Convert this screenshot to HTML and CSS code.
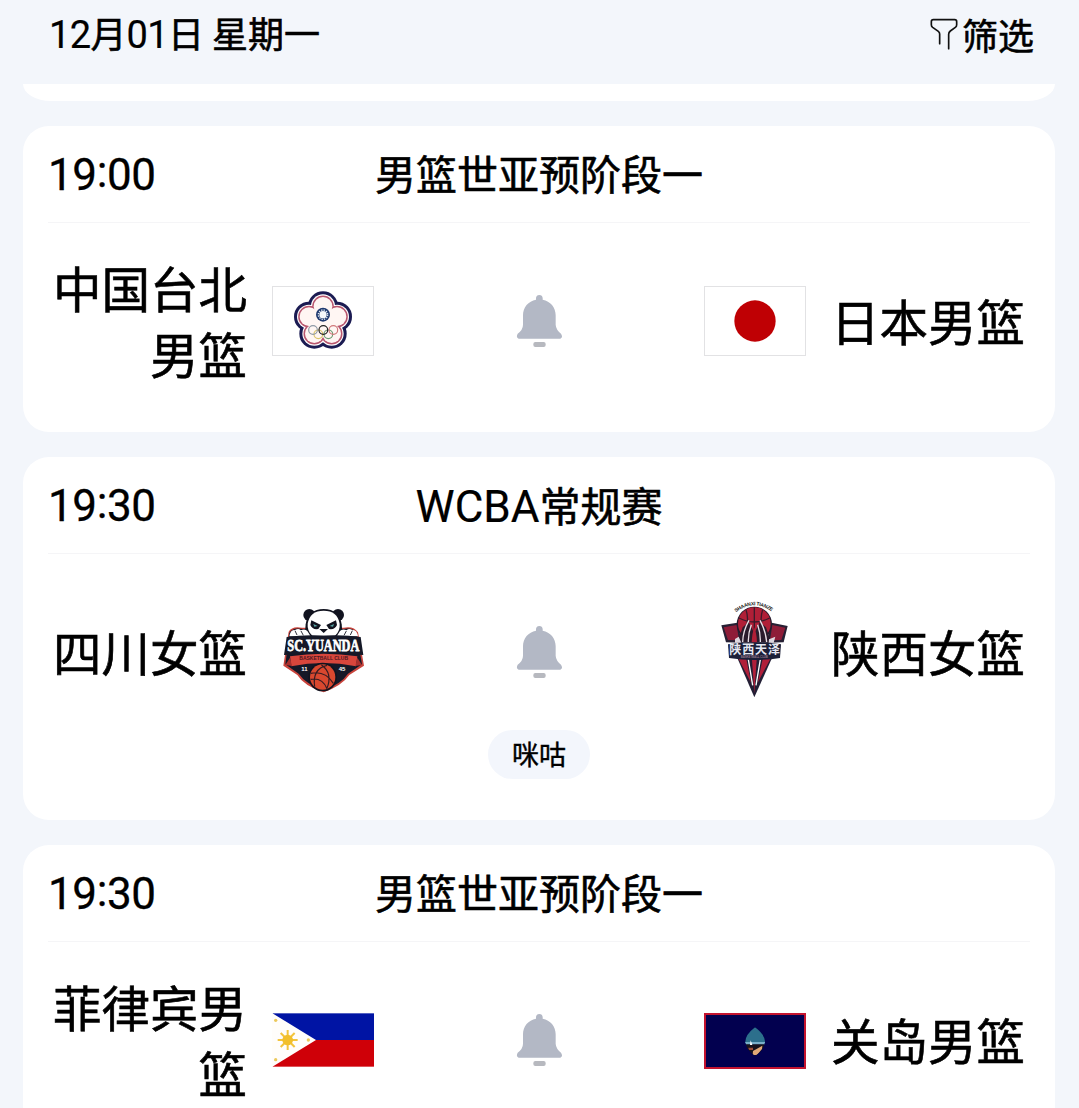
FILE: index.html
```html
<!DOCTYPE html>
<html lang="zh-CN">
<head>
  <meta charset="UTF-8">
  <title>赛程</title>
  <link rel="stylesheet" href="styles.css">
</head>
<body>

  <!-- shared icons -->
  <svg class="defs" width="0" height="0">
    <symbol id="bell" viewBox="467 466 141 162">
      <path fill="#b3b8c5" d="M527 483 V478 Q528 469 537 469 Q546 469 547 478 V483 C570 488 586 505 586 530 V558 Q587 573 602 585 Q609 596 600 600 H475 Q466 596 472 585 Q488 573 488 558 V530 C488 505 504 488 527 483 Z"/>
      <rect fill="#b7b9bf" x="519" y="610" width="37" height="15" rx="6"/>
    </symbol>
  </svg>

  <header class="top-bar">
    <div class="date"><span class="num">12</span>月<span class="num">01</span>日 星期一</div>
    <div class="filter">
      <svg class="filter-icon" viewBox="150 52 84 96">
        <path d="M179 129 V100 Q179 95 175 92 L158 80 Q154 77 154 72 V63 Q154 57 160 57 H224 Q230 57 230 63 V72 Q230 77 226 80 L211 91 Q206 95 206 101 V144"/>
      </svg>
      <span>筛选</span>
    </div>
  </header>

  <main class="schedule">
    <div class="card-tail"></div>

    <section class="card">
      <div class="card-head">
        <span class="time">19<span class="colon">:</span>00</span>
        <span class="league">男篮世亚预阶段一</span>
      </div>
      <div class="match">
        <div class="team home">中国台北男篮</div>
        <svg class="logo" viewBox="30 45 306 210">
          <rect x="31.5" y="46.5" width="303" height="207" fill="#fff" stroke="#e2e2e4" stroke-width="3"/>
          <g fill="#1b1b52">
            <circle cx="183" cy="106" r="45"/><circle cx="225" cy="137" r="45"/><circle cx="209" cy="188" r="45"/><circle cx="157" cy="188" r="45"/><circle cx="141" cy="137" r="45"/>
          </g>
          <g fill="#fff">
            <circle cx="183" cy="106" r="36"/><circle cx="225" cy="137" r="36"/><circle cx="209" cy="188" r="36"/><circle cx="157" cy="188" r="36"/><circle cx="141" cy="137" r="36"/>
          </g>
          <g fill="#b8566e">
            <circle cx="183" cy="106" r="32.5"/><circle cx="225" cy="137" r="32.5"/><circle cx="209" cy="188" r="32.5"/><circle cx="157" cy="188" r="32.5"/><circle cx="141" cy="137" r="32.5"/>
          </g>
          <g fill="#fff6f3">
            <circle cx="183" cy="106" r="28"/><circle cx="225" cy="137" r="28"/><circle cx="209" cy="188" r="28"/><circle cx="157" cy="188" r="28"/><circle cx="141" cy="137" r="28"/><circle cx="183" cy="152" r="44"/>
          </g>
          <circle cx="183" cy="131" r="21" fill="#1f3a70"/>
          <circle cx="183" cy="131" r="14" fill="none" stroke="#dfe8f2" stroke-width="4" stroke-dasharray="4 3.33"/>
          <circle cx="183" cy="131" r="11" fill="#f4f8fb"/>
          <g fill="none" stroke-width="3.5">
            <circle cx="169" cy="190" r="13" stroke="#dcc56a"/>
            <circle cx="199" cy="190" r="13" stroke="#6d9b72"/>
            <circle cx="153" cy="177" r="13" stroke="#8f99a5"/>
            <circle cx="214" cy="177" r="13" stroke="#d0787a"/>
            <circle cx="184" cy="177" r="13" stroke="#222"/>
          </g>
        </svg>
        <svg class="bell"><use href="#bell"/></svg>
        <svg class="logo" viewBox="0 0 306 210">
          <rect x="1.5" y="1.5" width="303" height="207" fill="#fff" stroke="#e2e2e4" stroke-width="3"/>
          <circle cx="153" cy="105" r="62" fill="#bf0004"/>
        </svg>
        <div class="team away">日本男篮</div>
      </div>
    </section>

    <section class="card">
      <div class="card-head">
        <span class="time">19<span class="colon">:</span>30</span>
        <span class="league"><span class="latin">WCBA</span>常规赛</span>
      </div>
      <div class="match">
        <div class="team home">四川女篮</div>
        <svg class="logo" viewBox="30 18 306 306">
          <path fill="#c9443c" d="M80 110 Q90 92 120 98 H245 Q275 92 288 112 L306 212 L262 240 Q240 272 185 292 Q125 272 106 240 L64 212 Z"/>
          <path fill="#151827" d="M82 114 Q92 96 122 102 H245 Q272 96 284 114 L300 208 L258 236 Q238 266 185 286 Q130 266 110 236 L70 208 Z"/>
          <!-- panda -->
          <circle cx="142" cy="60" r="18" fill="#11131f"/>
          <circle cx="228" cy="60" r="18" fill="#11131f"/>
          <path fill="#11131f" d="M131 88 Q138 42 185 42 Q232 42 239 88 L242 124 H128 Z"/>
          <path fill="#fff" d="M137 86 Q144 47 185 47 Q226 47 233 86 Q235 108 219 122 H151 Q135 108 137 86 Z"/>
          <path fill="#11131f" d="M148 76 L177 90 L169 102 Q151 105 145 90 Z M222 76 L193 90 L201 102 Q219 105 225 90 Z M172 102 H198 L185 114 Z"/>
          <path fill="#56a5a5" d="M154 87 L167 93 L157 95 Z M216 87 L203 93 L213 95 Z"/>
          <path fill="#fff" d="M82 124 Q86 102 99 105 Q110 98 116 106 Q129 100 136 108 L146 124 Z M288 124 Q284 102 271 105 Q260 98 254 106 Q241 100 234 108 L224 124 Z"/>
          <path fill="none" stroke="#31333e" stroke-width="3" d="M99 107 L105 120 M117 108 L124 121 M271 107 L265 120 M253 108 L246 121"/>
          <path fill="#151827" d="M74 126 Q128 118 185 122 Q242 118 296 126 L304 180 Q240 176 185 176 Q130 176 66 180 Z"/>
          <text class="yuanda" transform="scale(1 1.5)" x="184" y="113" textLength="216" lengthAdjust="spacingAndGlyphs">SC.YUANDA</text>
          <!-- ribbon -->
          <path fill="#d8463c" d="M84 184 Q185 168 286 184 L282 214 Q185 194 88 214 Z"/>
          <path fill="#a92f2d" d="M84 188 L70 210 L90 213 Z M286 188 L300 210 L280 213 Z"/>
          <text class="club" x="185" y="196" textLength="146" lengthAdjust="spacingAndGlyphs">BASKETBALL CLUB</text>
          <text class="year" x="127" y="228">11</text>
          <text class="year" x="240" y="228">45</text>
          <circle cx="182" cy="246" r="43" fill="#11131f"/>
          <circle cx="182" cy="246" r="38" fill="#d9482f"/>
          <path fill="none" stroke="#351b22" stroke-width="3.5" d="M146 235 Q190 226 214 265 M178 209 Q214 235 194 282 M195 211 Q150 222 158 275 M146 253 Q181 247 195 281"/>
        </svg>
        <svg class="bell"><use href="#bell"/></svg>
        <svg class="logo" viewBox="12 33 306 306">
          <defs>
            <path id="arc" d="M108 67 Q162 25 219 67"/>
          </defs>
          <text class="tianze-en"><textPath href="#arc" textLength="116">SHAANXI TIANZE</textPath></text>
          <path fill="#272034" d="M64 106 L112 98 L126 158 L78 157 Z M263 108 L215 98 L200 158 L251 157 Z"/>
          <path fill="#8e1c38" d="M71 112 L110 105 L117 151 L84 150 Z M256 113 L217 105 L210 151 L244 150 Z"/>
          <circle cx="163" cy="103" r="53" fill="#231a2c"/>
          <circle cx="163" cy="101" r="49" fill="#b01f37"/>
          <path fill="none" stroke="#3b1b2b" stroke-width="4" d="M163 52 V148 M117 84 Q163 108 209 84 M138 59 Q151 99 128 137 M188 59 Q175 99 198 137"/>
          <path fill="#2a1b2c" d="M112 158 L128 112 L146 96 L163 130 L180 96 L198 112 L214 158 Z"/>
          <path fill="none" stroke="#e9dfe6" stroke-width="4" d="M128 156 Q129 122 147 91 M145 156 Q144 130 154 104 M181 156 Q182 130 173 104 M200 156 Q197 122 180 91"/>
          <path fill="#b01f37" d="M155 158 Q156 130 163 112 Q170 130 171 158 Z"/>
          <path fill="#ddd7df" d="M105 147 L116 140 L124 158 H105 Z M207 148 L226 140 L221 158 H206 Z"/>
          <path fill="#231f35" d="M112 204 H216 L163 322 Z"/>
          <path fill="#b01f3a" d="M116 207 H139 L153 278 Z M211 207 H188 L173 278 Z M156 210 H170 L163 310 Z"/>
          <path fill="none" stroke="#fff" stroke-width="4" d="M145 208 L158 286 M181 208 L168 286"/>
          <path fill="#1c2039" d="M84 163 Q163 150 243 163 L240 204 Q163 216 87 204 Z"/>
          <text class="tianze" x="164" y="193" textLength="152">陕西天泽</text>
          <text class="club-small" x="163" y="205" textLength="82">BASKETBALL CLUB</text>
        </svg>
        <div class="team away">陕西女篮</div>
      </div>
      <div class="channels">
        <span class="channel">咪咕</span>
      </div>
    </section>

    <section class="card">
      <div class="card-head">
        <span class="time">19<span class="colon">:</span>30</span>
        <span class="league">男篮世亚预阶段一</span>
      </div>
      <div class="match">
        <div class="team home">菲律宾男篮</div>
        <svg class="logo" viewBox="30 39 306 162">
          <rect x="32" y="40" width="304" height="80" fill="#0014a4"/>
          <rect x="32" y="120" width="304" height="80" fill="#cf0008"/>
          <path fill="#fffdfb" d="M30 39 L162 120 L30 201 Z"/>
          <path stroke="#f3c43c" stroke-width="6" d="M77 90 V150 M47 120 H107 M56 99 L98 141 M98 99 L56 141"/>
          <circle cx="77" cy="120" r="16" fill="#f2bf2b"/>
          <g fill="#ecc95c">
            <circle cx="41" cy="61" r="5"/><circle cx="41" cy="179" r="5"/><circle cx="139" cy="120" r="5"/>
          </g>
        </svg>
        <svg class="bell"><use href="#bell"/></svg>
        <svg class="logo guam" viewBox="27 40 306 168">
          <rect x="30" y="43" width="300" height="162" fill="#02004f" stroke="#c4142f" stroke-width="6"/>
          <clipPath id="seal"><path d="M180 83 Q211 106 210 128 Q204 156 180 168 Q157 156 151 128 Q150 106 180 83 Z"/></clipPath>
          <g clip-path="url(#seal)">
            <rect x="148" y="80" width="66" height="50" fill="#2c6f8c"/>
            <rect x="148" y="127" width="66" height="8" fill="#78aec8"/>
            <rect x="148" y="134" width="66" height="36" fill="#17121c"/>
            <path fill="#e0a878" d="M173 166 L174 154 L202 138 L201 148 L186 166 Z"/>
            <path fill="#fff" d="M167 122 L172 136 H165 Z"/>
            <path fill="#9b4a35" d="M160 144 H174 V151 H162 Z"/>
          </g>
        </svg>
        <div class="team away">关岛男篮</div>
      </div>
    </section>
  </main>

</body>
</html>
```
FILE: styles.css
```css
* {
  box-sizing: border-box;
}

body {
  height: 1108px;
  margin: 0;
  overflow: hidden;
  background-color: #f3f6fb;
  color: #000;
  font-family: Roboto, "Noto Sans CJK SC", sans-serif;
  -webkit-text-stroke: 0.6px #000;
}

svg {
  display: block;
  overflow: visible;
  -webkit-text-stroke: 0;
}

.defs {
  display: none;
}

.top-bar {
  display: flex;
  justify-content: space-between;
  align-items: center;
  height: 84px;
  padding: 0 45px 17px 49px;
  font-family: "Noto Sans CJK SC", sans-serif;
  font-size: 36px;
  line-height: 50px;
}

.num {
  font-family: Roboto, sans-serif;
  font-size: 38px;
  letter-spacing: -0.6px;
  -webkit-text-stroke: 0.2px #000;
}

.filter {
  display: flex;
  align-items: center;
  gap: 4px;
}

.filter-icon {
  width: 28px;
  height: 32px;
  fill: none;
  stroke: #111;
  stroke-width: 5;
  stroke-linecap: round;
}

.schedule {
  display: flex;
  flex-direction: column;
  gap: 25px;
  padding: 0 24px 0 23px;
}

.card-tail {
  height: 17px;
  background-color: #fff;
  border-radius: 0 0 28px 28px / 0 0 17px 17px;
}

.card {
  background-color: #fff;
  border-radius: 26px;
  padding-bottom: 45px;
}

.card-head {
  display: grid;
  grid-template-columns: 200px 1fr 200px;
  align-items: center;
  height: 97px;
  margin: 0 25px;
  border-bottom: 1px solid #f5f5f7;
}

.time {
  padding-top: 2px;
  font-size: 44px;
  letter-spacing: -0.4px;
  -webkit-text-stroke: 0.3px #000;
}

.colon {
  vertical-align: 3px;
  line-height: 1;
}

.league {
  padding-top: 4px;
  font-size: 41px;
  line-height: 60px;
  text-align: center;
  white-space: nowrap;
}

.latin {
  font-size: 44px;
  -webkit-text-stroke: 0.2px #000;
}

.match {
  display: grid;
  grid-template-columns: 195px 102px 1fr 102px 195px;
  grid-template-rows: 133px;
  column-gap: 25px;
  align-items: center;
  margin: 31px 29px 0;
}

.team {
  padding-top: 9px;
  font-size: 48.5px;
  line-height: 66.5px;
}

.home {
  text-align: right;
}

.logo {
  width: 102px;
}

.guam {
  margin-top: 2px;
}

.bell {
  width: 47px;
  height: 54px;
  margin-top: 1px;
  justify-self: center;
}

.channels {
  display: flex;
  justify-content: center;
  margin: 12px 0 -4px;
}

.channel {
  padding: 3px 24px 0;
  border-radius: 25px;
  background-color: #f3f6fc;
  font-size: 27px;
  line-height: 46px;
  -webkit-text-stroke: 0.4px #000;
}

/* lettering inside the club logos */
.yuanda,
.club,
.year,
.tianze,
.club-small {
  text-anchor: middle;
  fill: #fff;
}

.yuanda {
  font: bold 35px "Liberation Serif", serif;
  stroke: #fff;
  stroke-width: 1.5;
}

.club {
  font: bold 16px "Liberation Sans", sans-serif;
  fill: #4b1620;
}

.year {
  font: bold 18px "Liberation Sans", sans-serif;
}

.tianze {
  font: bold 36px "Noto Sans CJK SC", sans-serif;
  fill: #e6e8f2;
}

.club-small {
  font: bold 9px "Liberation Sans", sans-serif;
  fill: #8e7387;
}

.tianze-en {
  font: bold 15px "Liberation Sans", sans-serif;
  fill: #222;
}
```
